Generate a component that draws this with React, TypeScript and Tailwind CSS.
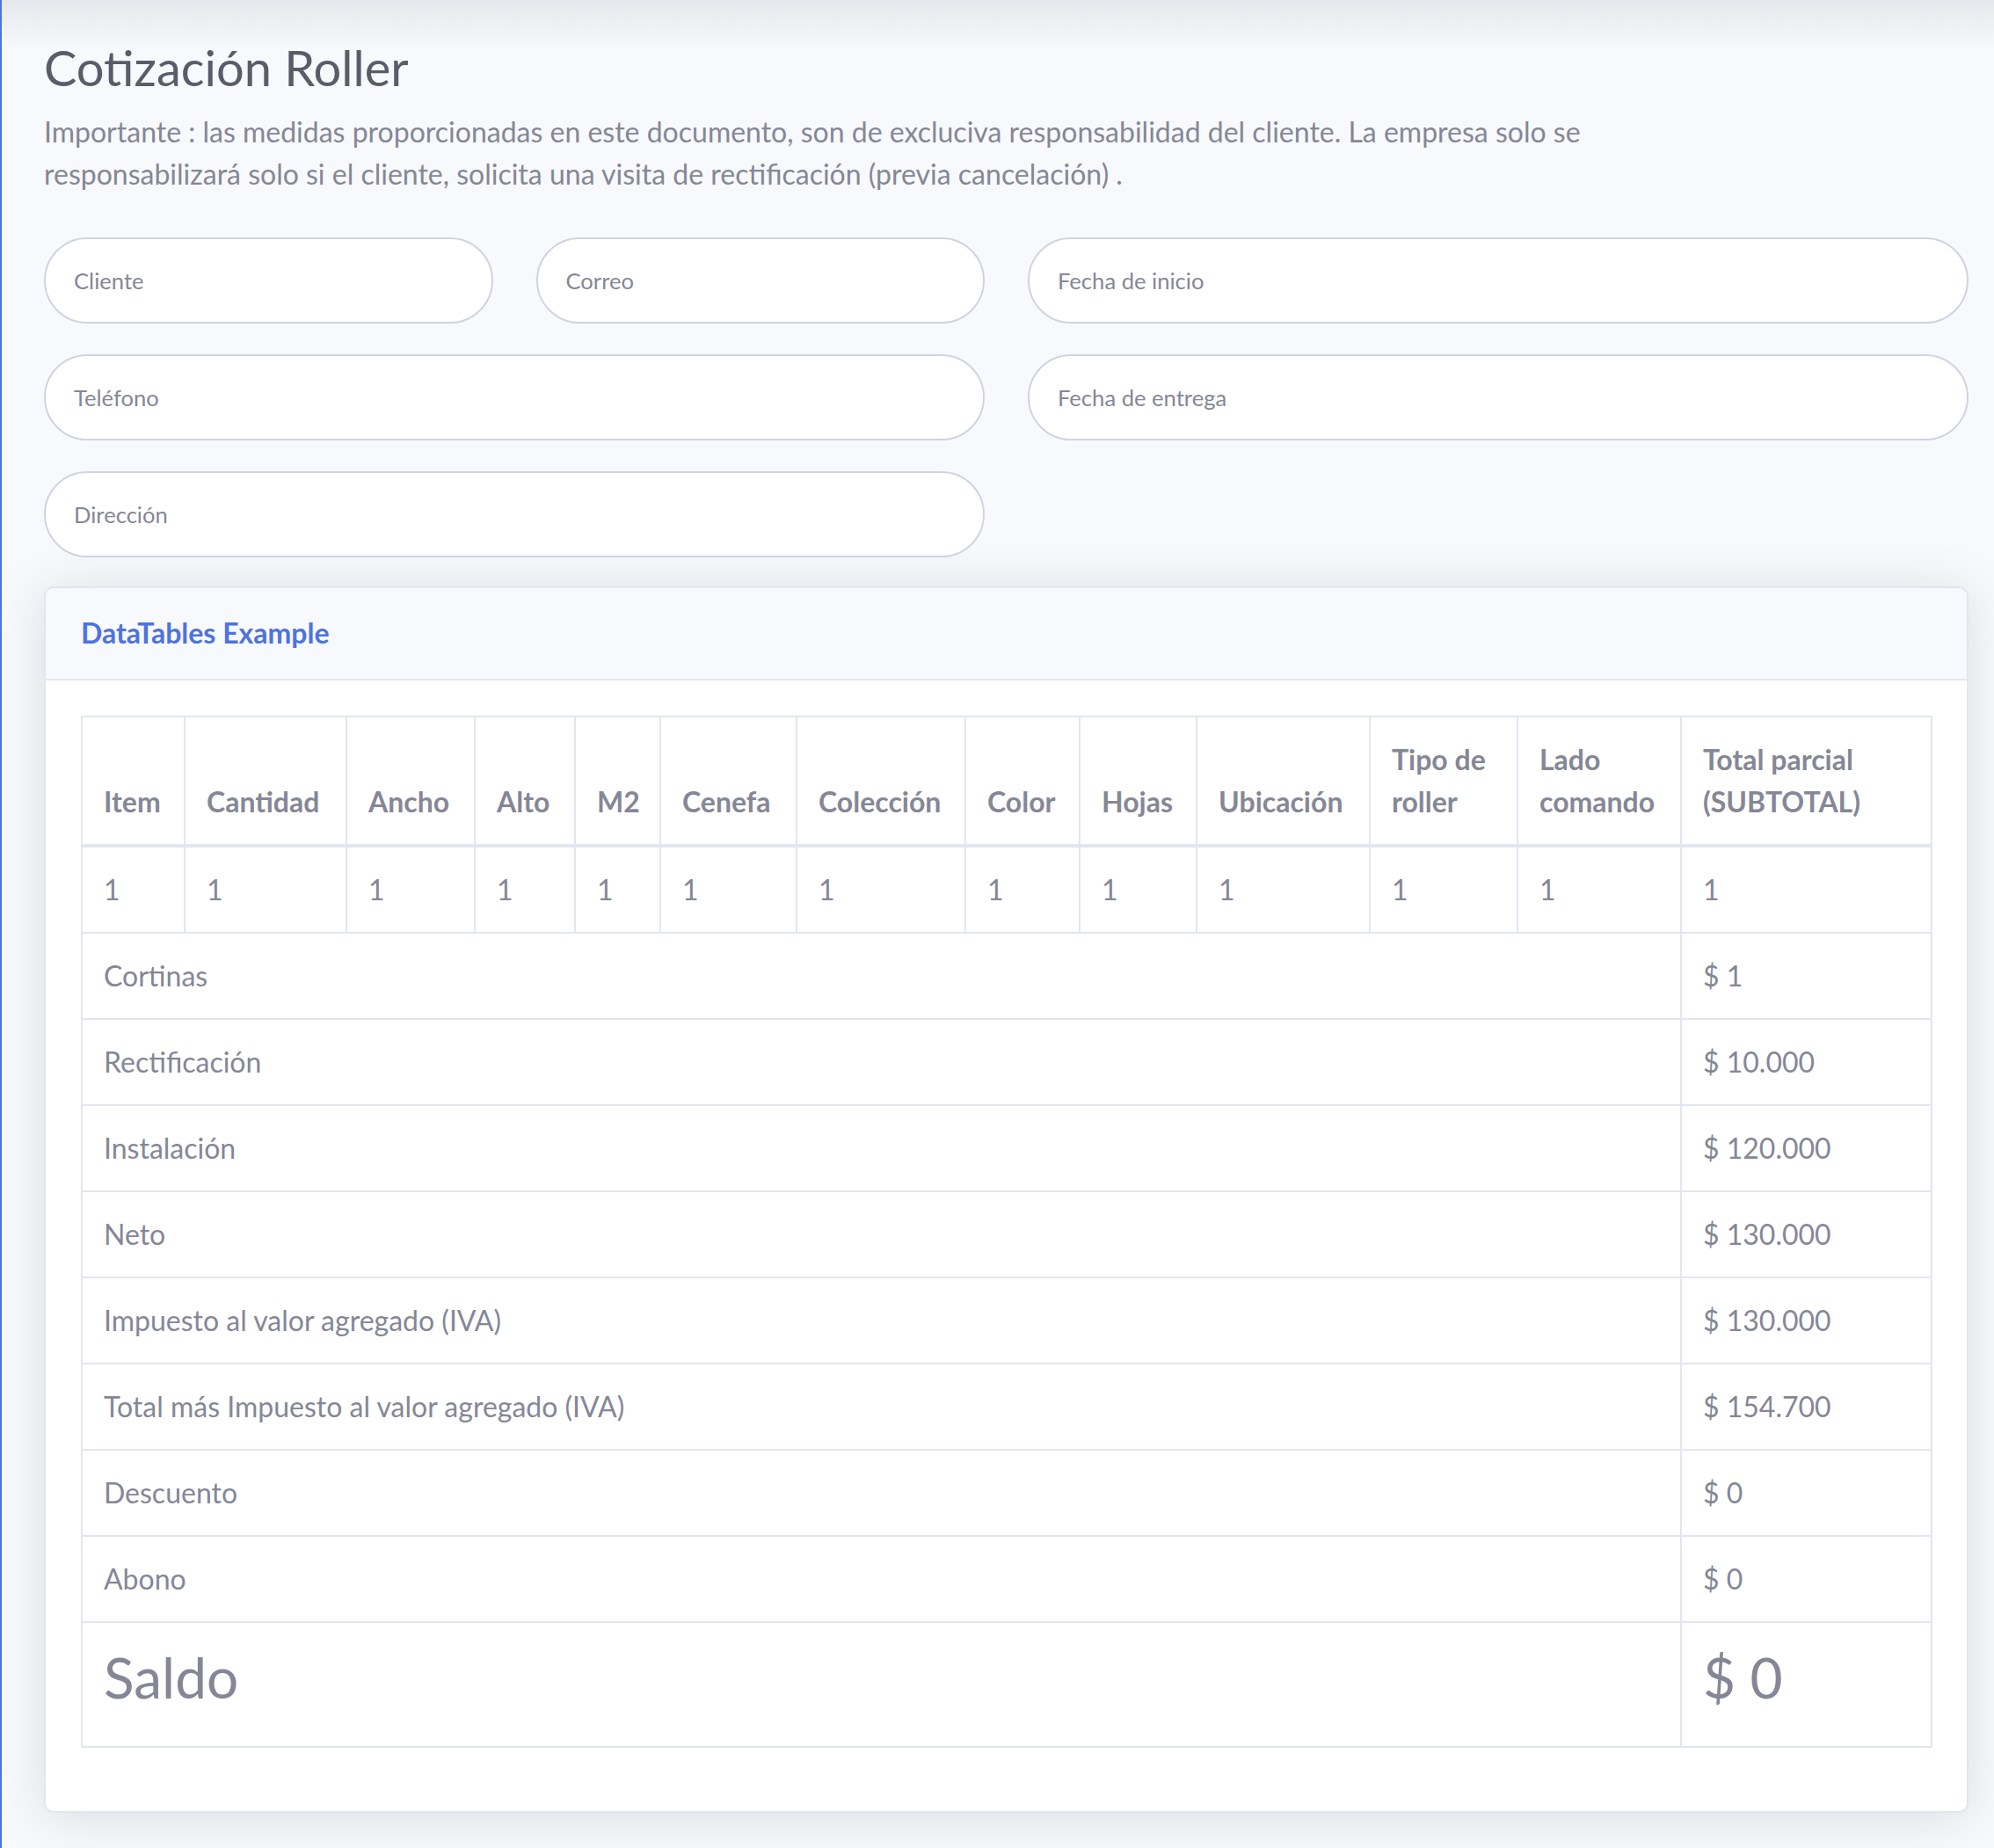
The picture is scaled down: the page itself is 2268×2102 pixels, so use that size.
import React from 'react';

const font = { fontFamily: 'Lato, "Open Sans", "Noto Sans", sans-serif' };

const inputClass =
  'w-full h-[98px] rounded-full border-2 border-[#d1d3e2] bg-white px-[32px] text-[25.6px] text-[#6e707e] placeholder:text-[#858796] outline-none';

const cellBorder = 'border-2 border-[#e3e6f0]';

const columns: { label: React.ReactNode; width: number }[] = [
  { label: 'Item', width: 117 },
  { label: 'Cantidad', width: 184 },
  { label: 'Ancho', width: 146 },
  { label: 'Alto', width: 114 },
  { label: 'M2', width: 97 },
  { label: 'Cenefa', width: 155 },
  { label: 'Colección', width: 192 },
  { label: 'Color', width: 130 },
  { label: 'Hojas', width: 133 },
  { label: 'Ubicación', width: 197 },
  { label: <>Tipo de<br />roller</>, width: 168 },
  { label: <>Lado<br />comando</>, width: 186 },
  { label: <>Total parcial<br />(SUBTOTAL)</>, width: 285 },
];

const totals = [
  { label: 'Cortinas', value: '$ 1' },
  { label: 'Rectificación', value: '$ 10.000' },
  { label: 'Instalación', value: '$ 120.000' },
  { label: 'Neto', value: '$ 130.000' },
  { label: 'Impuesto al valor agregado (IVA)', value: '$ 130.000' },
  { label: 'Total más Impuesto al valor agregado (IVA)', value: '$ 154.700' },
  { label: 'Descuento', value: '$ 0' },
  { label: 'Abono', value: '$ 0' },
];

function Field({ placeholder }: { placeholder: string }) {
  return <input type="text" placeholder={placeholder} className={inputClass} style={font} />;
}

export default function App() {
  return (
    <div
      className="relative min-h-[2102px] bg-[#f8f9fc] border-l-2 border-[#4e73df] overflow-hidden"
      style={font}
    >
      {/* topbar shadow bleeding into the page */}
      <div className="absolute top-0 left-0 right-0 h-[56px] bg-gradient-to-b from-[#e6e7ec] to-[#f8f9fc]/0 pointer-events-none" />

      <div className="relative pl-[48px] pr-[29px] pt-[43px]">
        <h1 className="text-[56px] leading-[1.2] text-[#5a5c69] mb-[16px]">Cotización Roller</h1>
        <p className="text-[32px] leading-[48px] text-[#858796] mb-[48px]">
          <span className="block whitespace-nowrap">
            Importante : las medidas proporcionadas en este documento, son de excluciva responsabilidad del cliente. La empresa solo se
          </span>
          <span className="block whitespace-nowrap">
            responsabilizará solo si el cliente, solicita una visita de rectificación (previa cancelación) .
          </span>
        </p>

        {/* Client form */}
        <div className="grid grid-cols-2 gap-x-[49px] gap-y-[35px]">
          <div className="grid grid-cols-2 gap-x-[49px]">
            <Field placeholder="Cliente" />
            <Field placeholder="Correo" />
          </div>
          <Field placeholder="Fecha de inicio" />
          <Field placeholder="Teléfono" />
          <Field placeholder="Fecha de entrega" />
          <Field placeholder="Dirección" />
        </div>

        {/* Quote table card */}
        <div className="mt-[33px] mb-[48px] bg-white rounded-[11px] border-2 border-[#e3e6f0] shadow-[0_5px_56px_0_rgba(58,59,69,0.15)] overflow-hidden">
          <div className="bg-[#f8f9fc] py-[32px] px-[40px] border-b-2 border-[#e3e6f0]">
            <h6 className="m-0 text-[32px] leading-[1.2] font-bold text-[#4e73df]">DataTables Example</h6>
          </div>
          <div className="p-[40px]">
            <table className="w-full table-fixed border-collapse text-[32px] leading-[48px] text-[#858796] mb-[32px]">
              <colgroup>
                {columns.map((c, i) => (
                  <col key={i} style={{ width: c.width }} />
                ))}
              </colgroup>
              <thead>
                <tr>
                  {columns.map((c, i) => (
                    <th
                      key={i}
                      className={`${cellBorder} border-b-4 p-[24px] text-left align-bottom font-bold whitespace-nowrap`}
                    >
                      {c.label}
                    </th>
                  ))}
                </tr>
              </thead>
              <tbody>
                <tr>
                  {columns.map((_, i) => (
                    <td key={i} className={`${cellBorder} p-[24px] align-top`}>
                      1
                    </td>
                  ))}
                </tr>
                {totals.map((row) => (
                  <tr key={row.label}>
                    <td colSpan={12} className={`${cellBorder} p-[24px] align-top`}>
                      {row.label}
                    </td>
                    <td className={`${cellBorder} p-[24px] align-top whitespace-nowrap`}>{row.value}</td>
                  </tr>
                ))}
                <tr>
                  <td colSpan={12} className={`${cellBorder} p-[24px] align-top`}>
                    <h2 className="text-[64px] leading-[1.2] mb-[16px]">Saldo</h2>
                  </td>
                  <td className={`${cellBorder} p-[24px] align-top whitespace-nowrap`}>
                    <h2 className="text-[64px] leading-[1.2] mb-[16px]">$ 0</h2>
                  </td>
                </tr>
              </tbody>
            </table>
          </div>
        </div>
      </div>
    </div>
  );
}
